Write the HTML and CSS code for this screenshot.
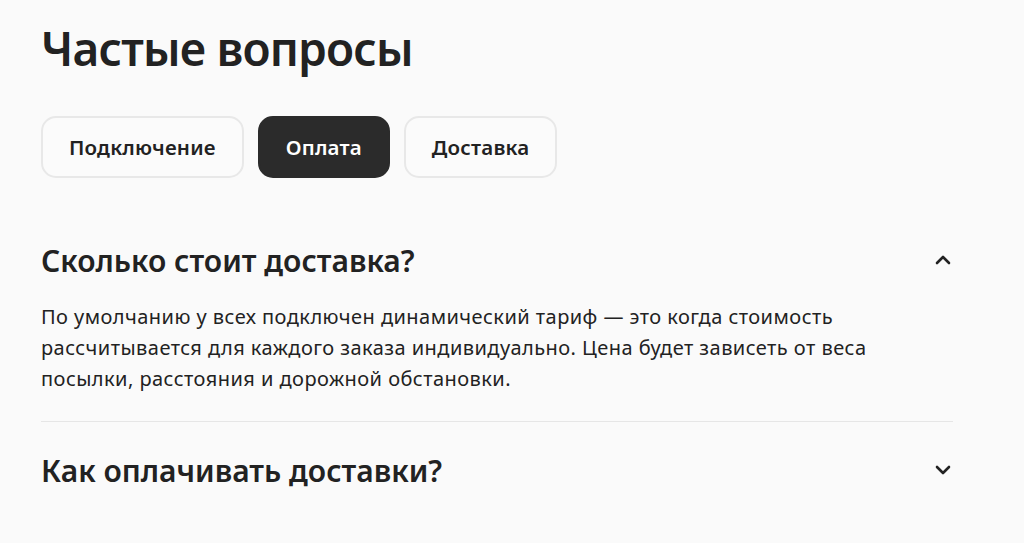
FILE: index.html
```html
<!DOCTYPE html>
<html lang="ru">
<head>
    <meta charset="UTF-8">
    <title>Частые вопросы</title>
    <link rel="stylesheet" href="styles.css">
</head>
<body>
    <div class="faq">
        <h1 class="faq-title">Частые вопросы</h1>

        <div class="tabs">
            <div class="tab">Подключение</div>
            <div class="tab tab-on">Оплата</div>
            <div class="tab">Доставка</div>
        </div>

        <div class="question question-open">
            <div class="question-head">
                <h2 class="question-title">Сколько стоит доставка?</h2>
                <svg class="chevron" width="24" height="24" viewBox="0 0 24 24">
                    <path d="M6 15l6-6 6 6" fill="none" stroke="#222" stroke-width="2.6" stroke-linecap="round" stroke-linejoin="round"/>
                </svg>
            </div>
            <p class="answer">По умолчанию у всех подключен динамический тариф — это когда стоимость рассчитывается для каждого заказа индивидуально. Цена будет зависеть от веса посылки, расстояния и дорожной обстановки.</p>
        </div>

        <div class="question">
            <div class="question-head">
                <h2 class="question-title">Как оплачивать доставки?</h2>
                <svg class="chevron" width="24" height="24" viewBox="0 0 24 24">
                    <path d="M6 9l6 6 6-6" fill="none" stroke="#222" stroke-width="2.6" stroke-linecap="round" stroke-linejoin="round"/>
                </svg>
            </div>
        </div>
    </div>
</body>
</html>
```

FILE: styles.css
```css
*{
    padding: 0;
    margin: 0;
    box-sizing: border-box;
}
body{
    background-color: #fafafa;
    color: #222;
    font-family: "Noto Sans", "Open Sans", sans-serif;
}
.faq{
    width: 912px;
    margin-left: 41px;
    padding-top: 20px;
}
.faq-title{
    font-size: 46px;
    font-weight: 600;
    line-height: 56px;
    letter-spacing: -0.8px;
}
.tabs{
    display: flex;
    gap: 14px;
    margin-top: 40px;
}
.tab{
    height: 62px;
    padding: 0 26px;
    border: 2px solid #e8e8e8;
    border-radius: 15px;
    background-color: #fbfbfb;
    display: flex;
    align-items: center;
    font-size: 20.5px;
    font-weight: 600;
    letter-spacing: 0.2px;
}
.tab-on{
    background-color: #2b2b2b;
    border-color: #2b2b2b;
    color: #fff;
}
.question{
    border-bottom: 1px solid #e6e6e6;
}
.question:last-child{
    border-bottom: none;
}
.question-head{
    display: flex;
    align-items: center;
    justify-content: space-between;
}
.question-open{
    margin-top: 60px;
    padding-bottom: 27px;
}
.question-open .question-head{
    height: 44px;
}
.question-title{
    font-size: 30px;
    font-weight: 600;
}
.chevron{
    margin-right: -2px;
}
.answer{
    margin-top: 19px;
    font-size: 20px;
    line-height: 31px;
    letter-spacing: 0.45px;
    max-width: 860px;
}
.question:last-child .question-head{
    height: 96px;
}
```
